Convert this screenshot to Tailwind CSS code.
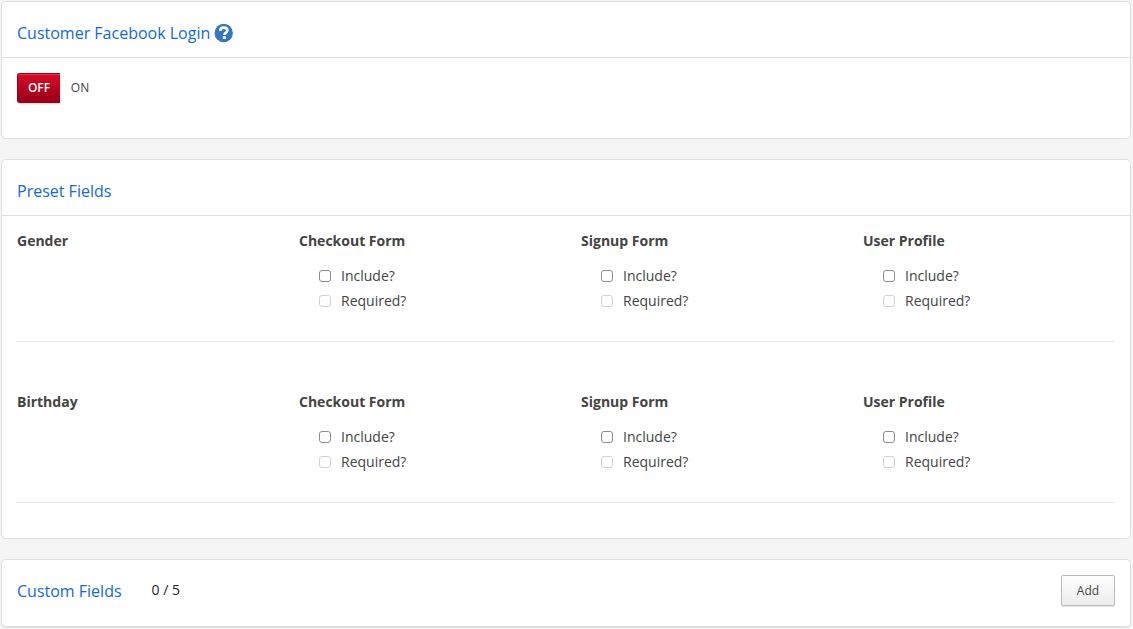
<!DOCTYPE html>
<html lang="en">
<head>
<meta charset="utf-8">
<meta name="viewport" content="width=device-width, initial-scale=1">
<title>Customer Fields</title>
<script src="https://cdn.jsdelivr.net/npm/@tailwindcss/browser@4"></script>
</head>
<body class="bg-[#f5f5f5] font-['Open_Sans',sans-serif] text-sm text-[#444]">
<main class="flex flex-col gap-5 pt-px pr-0.5 pb-px pl-px">

  <section class="rounded-[5px] border border-[#dfdfdf] bg-white pb-[35px]">
    <header class="flex h-14 items-center gap-1 border-b border-[#dfdfdf] px-[15px] pt-1.5">
      <h2 class="text-base text-[#126ad2]">Customer Facebook Login</h2>
      <button type="button" aria-label="Help" class="size-5">
        <svg viewBox="0 0 20 20" class="size-5" aria-hidden="true">
          <circle cx="9.7" cy="10" r="9.2" fill="#3576c0"/>
          <path d="M6.2 7.9C6.4 5.7 7.8 4.7 9.8 4.7c2.2 0 3.5 1.1 3.5 2.8 0 2.5-3 2.3-3 4.5" fill="none" stroke="#fff" stroke-width="2.7"/>
          <rect x="8.8" y="13.1" width="3" height="2.9" fill="#fff"/>
        </svg>
      </button>
    </header>
    <div class="flex px-[15px] pt-[15px] text-xs" role="group" aria-label="Customer Facebook Login">
      <button type="button" aria-pressed="true" class="h-[30px] w-[43px] rounded-l-[3px] border border-r-0 border-[#970019] bg-linear-to-b from-[#da0c26] to-[#970019] font-semibold text-white shadow-[0_1px_2px_rgba(0,0,0,0.2),inset_0_1px_0_rgba(255,255,255,0.2)]">OFF</button>
      <button type="button" aria-pressed="false" class="h-[30px] w-10">ON</button>
    </div>
  </section>

  <section class="rounded-[5px] border border-[#dfdfdf] bg-white pb-[35px]">
    <header class="flex h-14 items-center border-b border-[#dfdfdf] px-[15px] pt-1.5">
      <h2 class="text-base text-[#126ad2]">Preset Fields</h2>
    </header>
    <div class="flex flex-col gap-[35px] px-[15px]" id="fields"></div>
  </section>

  <section class="flex items-center rounded-[5px] border border-b-2 border-[#dfdfdf] bg-white px-[15px] pt-[15px] pb-5">
    <h2 class="text-base text-[#126ad2]">Custom Fields</h2>
    <span class="ml-[30px] pb-0.5 text-[#222]">0 / 5</span>
    <button type="button" class="ml-auto h-[31px] w-[54px] rounded-xs border border-[#bbb] bg-linear-to-b from-white to-[#ececec] text-xs shadow-[0_1px_1px_rgba(0,0,0,0.1)]">Add</button>
  </section>
</main>

<template id="row">
  <div class="grid grid-cols-4 gap-x-[30px] border-b border-[#e6e6e6] pt-[15px] pb-[30px]">
    <h3 class="font-bold"></h3>
  </div>
</template>
<template id="group">
  <fieldset>
    <legend class="mb-[15px] font-bold"></legend>
    <div class="flex flex-col gap-[5px] pl-5">
      <label class="flex items-center gap-2.5"><input type="checkbox" class="size-3 appearance-none rounded-[3px] border border-[#8c8c8c] bg-white checked:bg-[#126ad2]">Include?</label>
      <label class="flex items-center gap-2.5"><input type="checkbox" disabled class="size-3 appearance-none rounded-[3px] border border-[#d2d2d2] bg-white">Required?</label>
    </div>
  </fieldset>
</template>
<script>
for (const field of ['Gender', 'Birthday']) {
  const row = document.getElementById('row').content.cloneNode(true).firstElementChild;
  row.querySelector('h3').textContent = field;
  for (const form of ['Checkout Form', 'Signup Form', 'User Profile']) {
    const group = document.getElementById('group').content.cloneNode(true).firstElementChild;
    group.querySelector('legend').textContent = form;
    row.append(group);
  }
  document.getElementById('fields').append(row);
}
</script>
</body>
</html>
